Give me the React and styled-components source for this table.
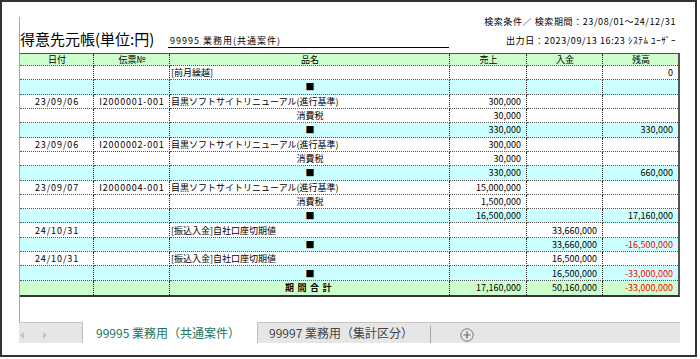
import styled, { createGlobalStyle } from "styled-components";

const GlobalStyle = createGlobalStyle`
  body {
    margin: 0;
    background: #fff;
    font-family: "Noto Sans CJK JP", "Noto Sans", sans-serif;
    color: #000;
  }
`;

const Frame = styled.div`
  box-sizing: border-box;
  width: 697px;
  height: 357px;
  border: 2px solid #333;
  padding: 15px 0 0 17px;
  display: flex;
  flex-direction: column;
`;

const Sheet = styled.div`
  width: 661px;
  height: 326px;
  display: flex;
  flex-direction: column;
`;

const SheetBody = styled.div`
  flex: 1;
  border-left: 1px solid #a6a6a6;
  display: flex;
  flex-direction: column;
`;

const TopArea = styled.div`
  box-sizing: border-box;
  height: 36px;
  display: flex;
  align-items: flex-end;
  padding-bottom: 5px;
`;

const Title = styled.div`
  width: 148px;
  font-size: 15px;
  line-height: 18px;
  white-space: nowrap;
`;

const Subtitle = styled.div`
  width: 281px;
  border-bottom: 1px solid #000;
  font-size: 9px;
  line-height: 12px;
  padding-left: 2px;
  box-sizing: border-box;
  letter-spacing: 1px;
  white-space: nowrap;
`;

const Info = styled.div`
  margin-left: auto;
  align-self: stretch;
  display: flex;
  flex-direction: column;
  justify-content: space-between;
  align-items: flex-end;
  padding: 0 4px 1px 0;
  font-size: 9px;
  letter-spacing: 0.6px;
`;

const InfoLine = styled.div`
  line-height: 12px;
  white-space: nowrap;
  margin-top: ${(p) => (p.$first ? "-1px" : "0")};
`;

const Table = styled.div`
  display: grid;
  grid-template-columns: 74px 76px 280px 77px 76px 75px;
  grid-template-rows: 12px repeat(16, 14.3125px);
  width: 660px;
  box-sizing: border-box;
  border-top: 1px solid #505050;
  border-right: 2px solid #555;
  border-bottom: 2px solid #333;
`;

const Cell = styled.div`
  box-sizing: border-box;
  display: flex;
  align-items: center;
  justify-content: ${(p) =>
    p.$align === "right" ? "flex-end" : p.$align === "center" ? "center" : "flex-start"};
  padding: ${(p) => (p.$align === "right" ? "0 5px 0 0" : "0 0 0 1px")};
  background: ${(p) => p.$bg || "#fff"};
  border-right: ${(p) => (p.$last ? "none" : "1px dotted #222")};
  border-bottom: ${(p) => (p.$end ? "none" : "1px dotted #555")};
  color: ${(p) => (p.$red ? "#ff0000" : "#000")};
  font-size: 9px;
  font-weight: ${(p) => (p.$bold ? 700 : 400)};
  letter-spacing: ${(p) => p.$spacing || "0"};
  white-space: nowrap;
  overflow: hidden;
`;

const TabBar = styled.div`
  height: 21px;
  display: flex;
  font-size: 12px;
`;

const ScrollBox = styled.div`
  box-sizing: border-box;
  width: 64px;
  background: #e6e6e6;
  border-top: 1px solid #c6c6c6;
  border-right: 1px solid #bdbdbd;
  display: flex;
  align-items: center;
  gap: 19px;
  padding: 4px 0 0 1px;
`;

const ActiveTab = styled.div`
  box-sizing: border-box;
  width: 174px;
  background: #fff;
  color: #1d7560;
  padding: 3px 0 0 13px;
  line-height: 16px;
  white-space: nowrap;
`;

const Tab = styled.div`
  box-sizing: border-box;
  width: 173px;
  background: #e6e6e6;
  border-top: 1px solid #c6c6c6;
  border-left: 1px solid #bdbdbd;
  color: #444;
  padding: 2px 0 0 11px;
  line-height: 16px;
  white-space: nowrap;
`;

const TabRest = styled.div`
  flex: 1;
  background: #e6e6e6;
  border-top: 1px solid #c6c6c6;
  display: flex;
  align-items: center;
`;

const Divider = styled.div`
  width: 1px;
  align-self: stretch;
  margin-top: 3px;
  background: #a8a8a8;
`;

const PlusButton = styled.div`
  margin: 4px 0 0 29px;
  display: flex;
`;

const COLS = ["日付", "伝票№", "品名", "売上", "入金", "残高"];

const NAME = "目黒ソフトサイトリニューアル(進行基準)";
const TRANSFER = "[振込入金]自社口座切期値";

const rows = [
  { name: "[前月繰越]", bal: "0" },
  { kind: "sub", name: "■" },
  { date: "23/09/06", no: "I2000001-001", name: NAME, sales: "300,000" },
  { name: "消費税", center: true, sales: "30,000" },
  { kind: "sub", name: "■", sales: "330,000", bal: "330,000" },
  { date: "23/09/06", no: "I2000002-001", name: NAME, sales: "300,000" },
  { name: "消費税", center: true, sales: "30,000" },
  { kind: "sub", name: "■", sales: "330,000", bal: "660,000" },
  { date: "23/09/07", no: "I2000004-001", name: NAME, sales: "15,000,000" },
  { name: "消費税", center: true, sales: "1,500,000" },
  { kind: "sub", name: "■", sales: "16,500,000", bal: "17,160,000" },
  { date: "24/10/31", name: TRANSFER, dep: "33,660,000" },
  { kind: "sub", name: "■", dep: "33,660,000", bal: "-16,500,000" },
  { date: "24/10/31", name: TRANSFER, dep: "16,500,000" },
  { kind: "sub", name: "■", dep: "16,500,000", bal: "-33,000,000" },
  { kind: "total", name: "期間合計", sales: "17,160,000", dep: "50,160,000", bal: "-33,000,000" },
];

const bgFor = (kind) =>
  kind === "sub" ? "#ccffff" : kind === "total" ? "#ccffcc" : "#fff";

function Arrow({ dir }) {
  return (
    <svg width="4" height="7" viewBox="0 0 4 7">
      <path d={dir === "left" ? "M4 0 L0 3.5 L4 7 Z" : "M0 0 L4 3.5 L0 7 Z"} fill="#c4c4c4" />
    </svg>
  );
}

function PlusIcon() {
  return (
    <svg width="14" height="14" viewBox="0 0 14 14">
      <circle cx="7" cy="7" r="6.2" fill="none" stroke="#7a7a7a" strokeWidth="1" />
      <path d="M7 3.5 V10.5 M3.5 7 H10.5" stroke="#6a6a6a" strokeWidth="1.2" />
    </svg>
  );
}

function LedgerRow({ row, end }) {
  const bg = bgFor(row.kind);
  const centered = row.kind === "sub" || row.kind === "total" || row.center;
  const negative = row.bal && row.bal.startsWith("-");
  return (
    <>
      <Cell $bg={bg} $end={end} $align="center" $spacing="0.9px">
        {row.date}
      </Cell>
      <Cell $bg={bg} $end={end} $align="center" $spacing="0.8px">
        {row.no}
      </Cell>
      <Cell
        $bg={bg}
        $end={end}
        $align={centered ? "center" : "left"}
        $bold={row.kind === "total"}
        $spacing={row.kind === "total" ? "3.5px" : "0"}
      >
        {row.name}
      </Cell>
      <Cell $bg={bg} $end={end} $align="right">
        {row.sales}
      </Cell>
      <Cell $bg={bg} $end={end} $align="right">
        {row.dep}
      </Cell>
      <Cell $bg={bg} $end={end} $align="right" $last $red={negative}>
        {row.bal}
      </Cell>
    </>
  );
}

export default function App() {
  return (
    <>
      <GlobalStyle />
      <Frame>
        <Sheet>
          <SheetBody>
            <TopArea>
              <Title>得意先元帳(単位:円)</Title>
              <Subtitle>99995 業務用(共通案件)</Subtitle>
              <Info>
                <InfoLine $first>検索条件／ 検索期間：23/08/01～24/12/31</InfoLine>
                <InfoLine>出力日：2023/09/13 16:23 ｼｽﾃﾑ ﾕｰｻﾞｰ</InfoLine>
              </Info>
            </TopArea>
            <Table>
              {COLS.map((c, i) => (
                <Cell key={c} $bg="#ccffcc" $align="center" $last={i === COLS.length - 1}>
                  {c}
                </Cell>
              ))}
              {rows.map((row, i) => (
                <LedgerRow key={i} row={row} end={i === rows.length - 1} />
              ))}
            </Table>
          </SheetBody>
          <TabBar>
            <ScrollBox>
              <Arrow dir="left" />
              <Arrow dir="right" />
            </ScrollBox>
            <ActiveTab>99995 業務用（共通案件）</ActiveTab>
            <Tab>99997 業務用（集計区分）</Tab>
            <TabRest>
              <Divider />
              <PlusButton>
                <PlusIcon />
              </PlusButton>
            </TabRest>
          </TabBar>
        </Sheet>
      </Frame>
    </>
  );
}
